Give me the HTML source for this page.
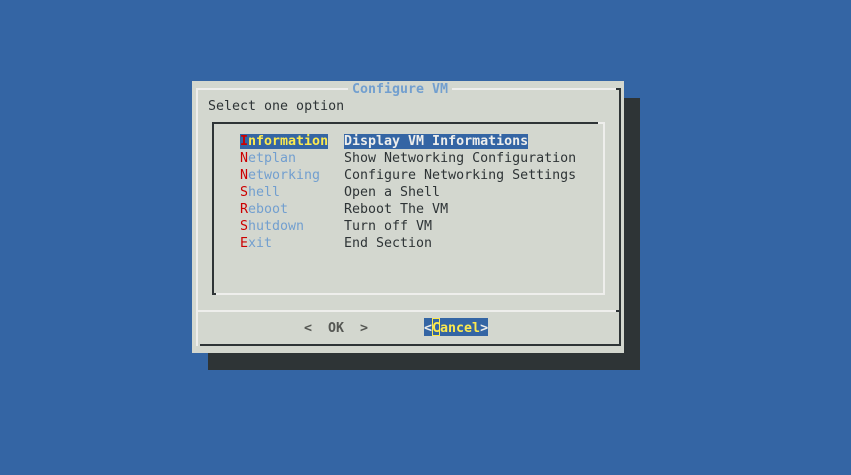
<!DOCTYPE html>
<html><head><meta charset="utf-8"><style>
html,body{margin:0;padding:0}
body{width:851px;height:475px;background:#3465a4;position:relative;overflow:hidden;font-family:"DejaVu Sans Mono","Liberation Mono",monospace;font-size:13.3px}
.a{position:absolute}
.t{position:absolute;height:17px;line-height:17px;white-space:pre;color:#2e3436}
.tag{color:#729fcf}
.r{color:#cc0000}
.sel{background:#3465a4;color:#fce94f;font-weight:bold}
.selw{background:#3465a4;color:#eeeeec;font-weight:bold}
</style></head><body>
<div class="a" style="left:208px;top:98px;width:432px;height:272px;background:#2e3436"></div>
<div class="a" style="left:192px;top:81px;width:432px;height:272px;background:#d3d7cf"></div>
<div class="a" style="left:196px;top:88px;width:420px;height:2px;background:#eeeeec"></div>
<div class="a" style="left:196px;top:88px;width:2px;height:258px;background:#eeeeec"></div>
<div class="a" style="left:619px;top:88px;width:2px;height:258px;background:#2e3436"></div>
<div class="a" style="left:616px;top:88px;width:5px;height:2px;background:#2e3436"></div>
<div class="a" style="left:200px;top:344px;width:421px;height:2px;background:#2e3436"></div>
<div class="a" style="left:348px;top:86px;width:104px;height:6px;background:#d3d7cf"></div>
<div class="t" style="left:352px;top:81px;color:#729fcf;font-weight:bold">Configure VM</div>
<div class="t" style="left:208px;top:98px">Select one option</div>
<div class="a" style="left:212px;top:122px;width:389px;height:2px;background:#2e3436"></div>
<div class="a" style="left:212px;top:122px;width:2px;height:173px;background:#2e3436"></div>
<div class="a" style="left:212px;top:293px;width:4px;height:2px;background:#2e3436"></div>
<div class="a" style="left:603px;top:122px;width:2px;height:173px;background:#eeeeec"></div>
<div class="a" style="left:216px;top:293px;width:389px;height:2px;background:#eeeeec"></div>
<div class="a" style="left:598px;top:122px;width:5px;height:2px;background:#eeeeec"></div>
<div class="a" style="left:198px;top:310px;width:419px;height:2px;background:#eeeeec"></div>
<div class="a" style="left:616px;top:310px;width:5px;height:2px;background:#2e3436"></div>

<div class="t" style="left:240px;top:133px"><span class="sel"><span class="r">I</span>nformation</span></div>
<div class="t" style="left:344px;top:133px"><span class="selw">Display VM Informations</span></div>
<div class="t tag" style="left:240px;top:150px"><span class="r">N</span>etplan</div>
<div class="t" style="left:344px;top:150px">Show Networking Configuration</div>
<div class="t tag" style="left:240px;top:167px"><span class="r">N</span>etworking</div>
<div class="t" style="left:344px;top:167px">Configure Networking Settings</div>
<div class="t tag" style="left:240px;top:184px"><span class="r">S</span>hell</div>
<div class="t" style="left:344px;top:184px">Open a Shell</div>
<div class="t tag" style="left:240px;top:201px"><span class="r">R</span>eboot</div>
<div class="t" style="left:344px;top:201px">Reboot The VM</div>
<div class="t tag" style="left:240px;top:218px"><span class="r">S</span>hutdown</div>
<div class="t" style="left:344px;top:218px">Turn off VM</div>
<div class="t tag" style="left:240px;top:235px"><span class="r">E</span>xit</div>
<div class="t" style="left:344px;top:235px">End Section</div>

<div class="t" style="left:304px;top:320px;font-weight:bold;color:#555753">&lt;  OK  &gt;</div>
<div class="a" style="left:424px;top:318px;width:64px;height:18px;background:#3465a4"></div>
<div class="t" style="left:424px;top:320px;font-weight:bold;color:#eeeeec">&lt;<span style="color:#fce94f">Cancel</span>&gt;</div>
<div class="a" style="left:432px;top:318px;width:6px;height:16px;border:1px solid #fce94f"></div>
</body></html>
